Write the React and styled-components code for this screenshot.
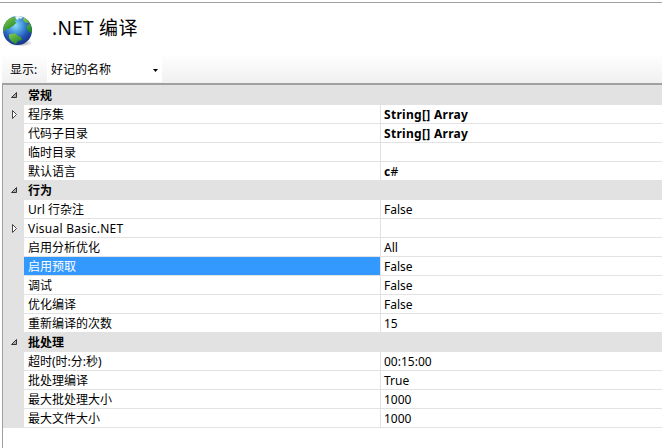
import React from "react";
import styled, { createGlobalStyle, css } from "styled-components";

const Global = createGlobalStyle`
  * { box-sizing: border-box; }
  body { margin: 0; background: #fff; overflow: hidden; }
`;

const Window = styled.main`
  width: 662px;
  height: 448px;
  padding-top: 2px;
  background: #fff;
  color: #000;
  font: 12px/18px "Noto Sans", "Noto Sans CJK SC", sans-serif;
  white-space: nowrap;
  overflow: hidden;
`;

const Header = styled.header`
  display: flex;
  height: 54px;
  padding: 12px 0 0 2px;
  border-top: 1px solid #a0a0a0;
`;

const Title = styled.h1`
  margin: -1px 0 0 18px;
  font-size: 19px;
  line-height: 28px;
  font-weight: 400;
  letter-spacing: 0.3px;
`;

const Toolbar = styled.div`
  display: flex;
  height: 27px;
  margin-left: 2px;
  padding-left: 8px;
  background: linear-gradient(#fefefe, #f0f0f0);
`;

const ToolLabel = styled.label`
  width: 37px;
  line-height: 27px;
`;

const Combo = styled.div`
  display: flex;
  align-items: center;
  justify-content: space-between;
  width: 115px;
  height: 26px;
  padding: 2px 4px 0 4px;
  background: #fff;
`;

const Grid = styled.section`
  height: 365px;
  margin-left: 2px;
  border-top: 2px solid #a0a0a0;
  border-left: 1px solid #a0a0a0;
`;

const Category = styled.div`
  display: grid;
  grid-template-columns: 21px 1fr;
  height: ${(p) => (p.$first ? 20 : 19)}px;
  padding-top: ${(p) => (p.$first ? 1 : 0)}px;
  background: #e2e2e2;
  font-weight: 700;
`;

const Row = styled.div`
  display: grid;
  grid-template-columns: 21px 356px 1fr;
  height: 19px;
`;

const Gutter = styled.div`
  padding: 5px 0 0 7px;
  background: #e2e2e2;
  line-height: 0;
`;

const cell = css`
  padding: 1px 0 0 4px;
  line-height: 18px;
  height: 19px;
  border-bottom: 1px solid #e2e2e2;
`;

const Name = styled.div`
  ${cell}
  letter-spacing: ${(p) => p.$spacing || 0}px;
  ${(p) => p.$selected && "background: #3399ff; color: #fff;"}
`;

const Value = styled.div`
  ${cell}
  padding-left: 3px;
  border-left: 1px solid #e2e2e2;
  font-weight: ${(p) => (p.$bold ? 700 : 400)};
  letter-spacing: ${(p) => p.$spacing || 0}px;
`;

const CategoryName = styled.div`
  padding: 1px 0 0 4px;
  line-height: 18px;
`;

const Globe = () => (
  <svg width="32" height="34" viewBox="0 0 32 34" aria-hidden="true">
    <defs>
      <radialGradient id="ocean" cx="43%" cy="32%" r="66%">
        <stop offset="0" stopColor="#8fdcf8" />
        <stop offset=".35" stopColor="#4b9fe0" />
        <stop offset=".7" stopColor="#2458b8" />
        <stop offset="1" stopColor="#17358b" />
      </radialGradient>
      <radialGradient id="shade">
        <stop offset="0" stopColor="#555" stopOpacity=".75" />
        <stop offset="1" stopColor="#777" stopOpacity="0" />
      </radialGradient>
      <linearGradient id="land" x2=".6" y2="1">
        <stop offset="0" stopColor="#8fd04c" />
        <stop offset="1" stopColor="#21882f" />
      </linearGradient>
      <clipPath id="ball"><circle cx="15.5" cy="15.5" r="14.5" /></clipPath>
    </defs>
    <ellipse cx="18" cy="28" rx="13" ry="3.6" fill="url(#shade)" />
    <circle cx="15.5" cy="15.5" r="14.5" fill="url(#ocean)" />
    <g clipPath="url(#ball)" fill="url(#land)">
      <path d="M1 15C1 7 6 2 13 2l1 2-1 2 1 2-3 3-2 1-2 2-3 0-1 2-3 1Z" />
      <path d="M7 20q1-2 4-1l2-1 3 3 3 1 1 3-4 1-2 3-4-2-3-4Z" />
      <path d="M22 2l4 3 3 4-2-1-3 0-3-3ZM25 11l3-3 2 5v5l-3-1-2-3Z" />
      <path d="M13 1l4-1 4 2-2 2-2-1-1 2-2-1Z" fill="#e5f6f7" />
    </g>
  </svg>
);

const Expanded = () => (
  <svg width="9" height="9" viewBox="0 0 9 9">
    <path d="M6.5 1.5v5h-5Z" fill="#aaa" stroke="#333" />
  </svg>
);

const Collapsed = () => (
  <svg width="9" height="9" viewBox="0 0 9 9">
    <path d="M2.5 .5v8l4-4Z" fill="#fff" stroke="#444" />
  </svg>
);

const Plain = styled.span`
  font-weight: 500;
`;

const groups = [
  { name: "常规", rows: [
    { name: "程序集", value: "String[] Array", bold: true, spacing: 0.3, expandable: true },
    { name: "代码子目录", value: "String[] Array", bold: true, spacing: 0.3 },
    { name: "临时目录", value: "" },
    { name: "默认语言", value: <>c<Plain>#</Plain></>, bold: true, spacing: 0.3 },
  ] },
  { name: "行为", rows: [
    { name: "Url 行杂注", value: "False" },
    { name: "Visual Basic.NET", nameSpacing: 0.26, value: "", expandable: true },
    { name: "启用分析优化", value: "All" },
    { name: "启用预取", value: "False", selected: true },
    { name: "调试", value: "False" },
    { name: "优化编译", value: "False" },
    { name: "重新编译的次数", value: "15" },
  ] },
  { name: "批处理", rows: [
    { name: "超时(时:分:秒)", value: "00:15:00" },
    { name: "批处理编译", value: "True" },
    { name: "最大批处理大小", value: "1000" },
    { name: "最大文件大小", value: "1000" },
  ] },
];

export default function App() {
  return (
    <Window>
      <Global />
      <Header>
        <Globe />
        <Title>.NET 编译</Title>
      </Header>
      <Toolbar>
        <ToolLabel>显示:</ToolLabel>
        <Combo>
          好记的名称
          <svg width="5" height="3" viewBox="0 0 5 3"><path d="M0 0h5L2.5 3Z" /></svg>
        </Combo>
      </Toolbar>
      <Grid>
        {groups.map((group, i) => (
          <React.Fragment key={group.name}>
            <Category $first={i === 0}>
              <Gutter><Expanded /></Gutter>
              <CategoryName>{group.name}</CategoryName>
            </Category>
            {group.rows.map((row) => (
              <Row key={row.name}>
                <Gutter>{row.expandable && <Collapsed />}</Gutter>
                <Name $selected={row.selected} $spacing={row.nameSpacing}>{row.name}</Name>
                <Value $bold={row.bold} $spacing={row.spacing}>{row.value}</Value>
              </Row>
            ))}
          </React.Fragment>
        ))}
      </Grid>
    </Window>
  );
}
